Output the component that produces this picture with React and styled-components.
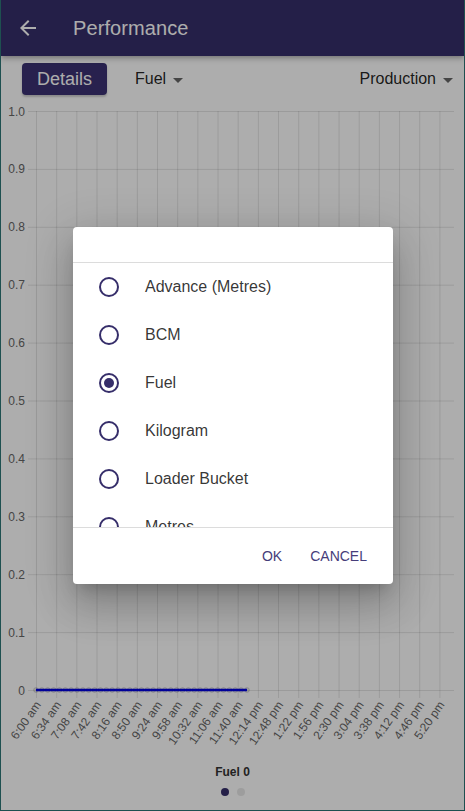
import React from "react";
import styled, { createGlobalStyle } from "styled-components";

const PRIMARY = "#362e6a";

const Global = createGlobalStyle`
  html, body { margin: 0; padding: 0; background: #1e5050; }
  body { font-family: "Liberation Sans", Arial, sans-serif; }
  * { box-sizing: border-box; }
`;

const Frame = styled.div`
  position: relative;
  width: 465px;
  height: 811px;
  border: 1px solid #1e5050;
  border-top: none;
  background: #fff;
  overflow: hidden;
  display: flex;
  flex-direction: column;
`;

const AppBar = styled.header`
  height: 56px;
  flex: none;
  background: ${PRIMARY};
  color: #fff;
  display: flex;
  align-items: center;
  padding-left: 15px;
  gap: 33px;
  box-shadow: 0 2px 4px -1px rgba(0,0,0,0.2), 0 4px 5px 0 rgba(0,0,0,0.14);
  position: relative;
  z-index: 1;
`;

const Title = styled.h1`
  margin: 0;
  font-size: 20px;
  font-weight: 400;
  letter-spacing: 0.1px;
`;

const ToolBar = styled.div`
  height: 46px;
  flex: none;
  display: flex;
  align-items: center;
  padding: 0 11px 0 21px;
`;

const PrimaryButton = styled.button`
  height: 32px;
  padding: 0 15px;
  border: none;
  border-radius: 4px;
  background: #3b3273;
  color: #fff;
  font-family: inherit;
  font-size: 18px;
  box-shadow: 0 2px 2px rgba(0,0,0,0.2);
`;

const Select = styled.div`
  display: flex;
  align-items: center;
  gap: 7px;
  font-size: 16px;
  color: rgba(0,0,0,0.87);
  margin-left: ${(p) => (p.$right ? "auto" : "28px")};
`;

const Caret = styled.span`
  width: 0;
  height: 0;
  border-left: 5px solid transparent;
  border-right: 5px solid transparent;
  border-top: 5px solid #666;
  margin-top: 2px;
`;

const ChartSvg = styled.svg`
  display: block;
  flex: none;
  width: 463px;
  height: 662px;
`;

const Legend = styled.div`
  text-align: center;
  font-size: 12px;
  font-weight: 700;
  line-height: 16px;
  color: #333;
`;

const Dots = styled.div`
  display: flex;
  justify-content: center;
  gap: 8px;
  margin-top: 8px;
  padding-left: 1px;
`;

const Dot = styled.span`
  width: 8px;
  height: 8px;
  border-radius: 50%;
  background: ${(p) => (p.$active ? PRIMARY : "#e8e8e8")};
`;

const Backdrop = styled.div`
  position: absolute;
  inset: 0;
  background: rgba(0,0,0,0.32);
  display: flex;
  align-items: center;
  justify-content: center;
  z-index: 10;
`;

const Dialog = styled.div`
  width: 320px;
  background: #fff;
  border-radius: 4px;
  margin-left: 1px;
  box-shadow: 0 11px 15px -7px rgba(0,0,0,0.2), 0 24px 38px 3px rgba(0,0,0,0.14), 0 9px 46px 8px rgba(0,0,0,0.12);
  display: flex;
  flex-direction: column;
`;

const DialogTitle = styled.div`
  height: 36px;
  border-bottom: 1px solid #dcdcdc;
`;

const OptionList = styled.div`
  height: 264px;
  overflow: hidden;
`;

const Option = styled.label`
  height: 48px;
  display: flex;
  align-items: center;
  padding-left: 26px;
  gap: 26px;
  font-size: 16px;
  color: rgba(0,0,0,0.8);
`;

const Radio = styled.span`
  width: 20px;
  height: 20px;
  flex: none;
  border-radius: 50%;
  border: 2px solid ${PRIMARY};
  display: flex;
  align-items: center;
  justify-content: center;
  &::after {
    content: "";
    width: 10px;
    height: 10px;
    border-radius: 50%;
    background: ${PRIMARY};
    display: ${(p) => (p.$checked ? "block" : "none")};
  }
`;

const Actions = styled.div`
  height: 57px;
  border-top: 1px solid #dcdcdc;
  display: flex;
  align-items: center;
  justify-content: flex-end;
  gap: 12px;
  padding-right: 18px;
`;

const TextButton = styled.button`
  border: none;
  background: none;
  padding: 0 8px;
  height: 36px;
  font-family: inherit;
  font-size: 14px;
  color: #463d7a;
  text-transform: uppercase;
`;

const BackIcon = () => (
  <svg width="24" height="24" viewBox="0 0 24 24" fill="#fff">
    <path d="M20 11H7.83l5.59-5.59L12 4l-8 8 8 8 1.41-1.41L7.83 13H20v-2z" />
  </svg>
);

const times = [
  "6:00 am", "6:34 am", "7:08 am", "7:42 am", "8:16 am", "8:50 am", "9:24 am",
  "9:58 am", "10:32 am", "11:06 am", "11:40 am", "12:14 pm", "12:48 pm",
  "1:22 pm", "1:56 pm", "2:30 pm", "3:04 pm", "3:38 pm", "4:12 pm", "4:46 pm", "5:20 pm",
];

const X0 = 36;
const X1 = 454;
const STEP = 20.17;
const Y0 = 690;
const YU = 57.9;

function Chart() {
  const yTicks = Array.from({ length: 11 }, (_, i) => i);
  const points = Array.from({ length: 37 }, (_, i) => X0 + i * 5.86);
  return (
    <ChartSvg viewBox="1 102 463 662">
      <g stroke="rgba(0,0,0,0.1)" strokeWidth="1">
        {yTicks.map((i) => (
          <line key={"h" + i} x1={28} x2={X1} y1={Y0 - i * YU + 0.5} y2={Y0 - i * YU + 0.5} />
        ))}
        {times.map((t, i) => (
          <line key={"v" + i} x1={X0 + i * STEP + 0.5} x2={X0 + i * STEP + 0.5} y1={Y0 - 10 * YU} y2={Y0 + 8} />
        ))}
      </g>
      <g fill="#666" fontSize="12" fontFamily="Liberation Sans, Arial, sans-serif" textAnchor="end">
        {yTicks.map((i) => (
          <text key={"yl" + i} x={25} y={Y0 - i * YU + 4.5}>
            {i === 0 ? "0" : i === 10 ? "1.0" : (i / 10).toFixed(1)}
          </text>
        ))}
        {times.map((t, i) => (
          <text
            key={"xl" + i}
            transform={`translate(${X0 + i * STEP + 3}, 703) rotate(-55)`}
            dominantBaseline="middle"
          >
            {t}
          </text>
        ))}
      </g>
      <line x1={X0} x2={points[points.length - 1]} y1={Y0} y2={Y0} stroke="#0000ff" strokeWidth="2.5" />
      <g fill="rgba(0,0,0,0.1)" stroke="rgba(0,0,0,0.1)">
        {points.map((x, i) => (
          <circle key={"p" + i} cx={x} cy={Y0} r="2.5" />
        ))}
      </g>
    </ChartSvg>
  );
}

const options = ["Advance (Metres)", "BCM", "Fuel", "Kilogram", "Loader Bucket", "Metres", "Tonnes"];

export default function App() {
  return (
    <>
      <Global />
      <Frame>
        <AppBar>
          <BackIcon />
          <Title>Performance</Title>
        </AppBar>
        <ToolBar>
          <PrimaryButton>Details</PrimaryButton>
          <Select>
            Fuel <Caret />
          </Select>
          <Select $right>
            Production <Caret />
          </Select>
        </ToolBar>
        <Chart />
        <Legend>Fuel 0</Legend>
        <Dots>
          <Dot $active />
          <Dot />
        </Dots>
        <Backdrop>
          <Dialog>
            <DialogTitle />
            <OptionList>
              {options.map((o) => (
                <Option key={o}>
                  <Radio $checked={o === "Fuel"} />
                  {o}
                </Option>
              ))}
            </OptionList>
            <Actions>
              <TextButton>Ok</TextButton>
              <TextButton>Cancel</TextButton>
            </Actions>
          </Dialog>
        </Backdrop>
      </Frame>
    </>
  );
}
